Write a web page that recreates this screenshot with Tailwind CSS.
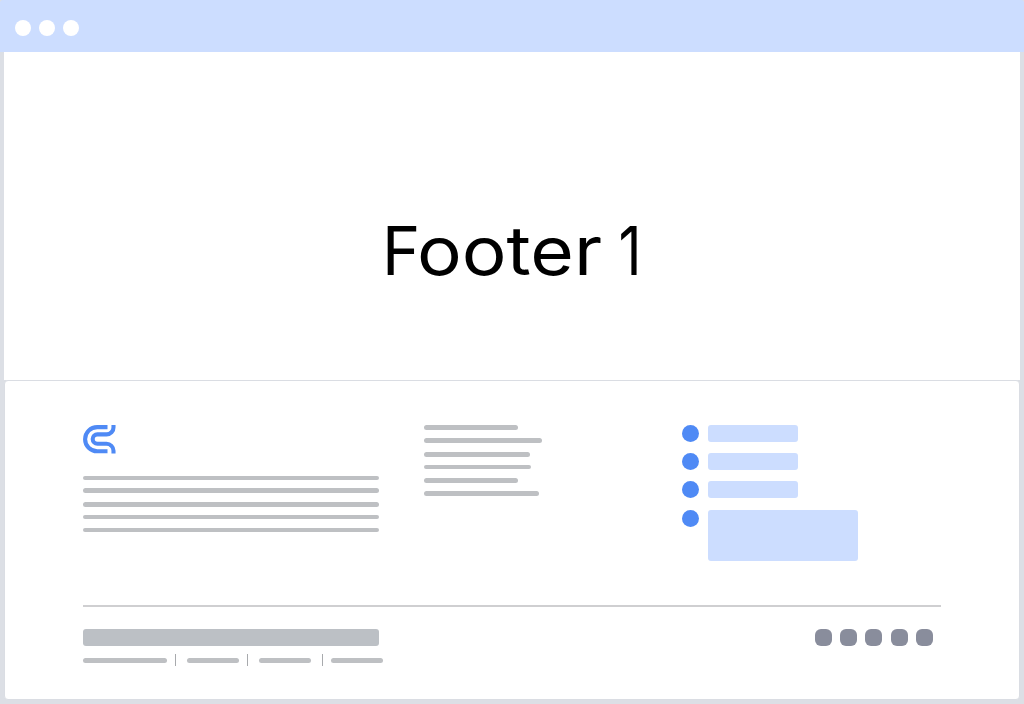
<!DOCTYPE html>
<html lang="en">
<head>
<meta charset="utf-8">
<title>Footer 1</title>
<script src="https://cdn.jsdelivr.net/npm/@tailwindcss/browser@4"></script>
</head>
<body class="w-[1024px] h-[704px] overflow-hidden bg-[#dcdfe5]">
<div class="flex flex-col h-[704px] w-[1024px]">
  <header class="flex items-center h-[52px] shrink-0 bg-[#ccddff] pl-[15px] pt-1 gap-[8.500px] rounded-t-[3px]">
    <span class="size-[15.500px] rounded-full bg-white"></span>
    <span class="size-[15.500px] rounded-full bg-white"></span>
    <span class="size-[15.500px] rounded-full bg-white"></span>
  </header>
  <main class="h-[328px] shrink-0 mx-1 bg-white pl-[378px] pt-[158px]">
    <h1 class="flex font-['Inter',sans-serif] text-[67.5px] leading-[82px] text-black whitespace-pre"><span class="w-[35px] inline-block origin-left scale-x-[0.96]">F</span><span class="inline-block origin-left scale-x-[1.107] w-[178px]">ooter</span><span> </span><span class="inline-block origin-right scale-x-[0.84]">1</span></h1>
  </main>
  <footer class="h-[320px] shrink-0 mx-1 bg-white border border-[#dadde3] rounded-[4px] px-[78px] pt-[44px]">
    <div class="flex h-[180px]">
      <section class="w-[296px] mr-[45px]">
        <svg class="block" width="33" height="29" viewBox="0 0 33 29" fill="none" stroke="#4f8af5" stroke-width="4.1">
          <path d="M24.5 2.1H14.2a12.100 12.100 0 0 0 0 24.200H24.5"/>
          <path d="M30.500 0V2.2A7 7 0 0 1 23.500 9.4H14.4a4.700 4.700 0 0 0 0 9.4H23.500A7 7 0 0 1 30.500 25.800V28.500"/>
        </svg>
        <div class="flex flex-col mt-[22px]">
          <i class="block h-1 rounded-full bg-[#bec0c3]"></i>
          <i class="block h-[5px] mt-2 rounded-full bg-[#bec0c3]"></i>
          <i class="block h-[5px] mt-[9px] rounded-full bg-[#bec0c3]"></i>
          <i class="block h-1 mt-2 rounded-full bg-[#bec0c3]"></i>
          <i class="block h-1 mt-[9px] rounded-full bg-[#bec0c3]"></i>
        </div>
      </section>
      <section class="w-[258px] flex flex-col">
        <i class="block h-[5px] w-[94px] rounded-full bg-[#bec0c3]"></i>
        <i class="block h-[5px] mt-2 w-[118px] rounded-full bg-[#bec0c3]"></i>
        <i class="block h-[5px] mt-[9px] w-[106px] rounded-full bg-[#bec0c3]"></i>
        <i class="block h-1 mt-2 w-[107px] rounded-full bg-[#bec0c3]"></i>
        <i class="block h-[5px] mt-[9px] w-[94px] rounded-full bg-[#bec0c3]"></i>
        <i class="block h-[5px] mt-2 w-[115px] rounded-full bg-[#bec0c3]"></i>
      </section>
      <section class="flex flex-col">
        <div class="flex gap-[9px] h-7"><i class="size-[17px] rounded-full bg-[#4f8af5]"></i><i class="w-[90px] h-[17px] rounded-[3px] bg-[#ccddff]"></i></div>
        <div class="flex gap-[9px] h-7"><i class="size-[17px] rounded-full bg-[#4f8af5]"></i><i class="w-[90px] h-[17px] rounded-[3px] bg-[#ccddff]"></i></div>
        <div class="flex gap-[9px] h-[29px]"><i class="size-[17px] rounded-full bg-[#4f8af5]"></i><i class="w-[90px] h-[17px] rounded-[3px] bg-[#ccddff]"></i></div>
        <div class="flex gap-[9px]"><i class="size-[17px] rounded-full bg-[#4f8af5]"></i><i class="w-[150px] h-[50.500px] rounded-[3px] bg-[#ccddff]"></i></div>
      </section>
    </div>
    <div class="h-[2px] bg-[#cfcfd1]"></div>
    <div class="flex justify-between pt-[22px]">
      <div>
        <div class="w-[296px] h-[17px] rounded-[3px] bg-[#bcc0c5]"></div>
        <div class="flex items-center h-3 mt-2">
          <i class="w-[84px] h-[5px] rounded-full bg-[#bec0c3]"></i>
          <i class="w-px h-3 bg-[#a8aaad] ml-2"></i>
          <i class="w-[52px] h-[5px] rounded-full bg-[#bec0c3] ml-[11px]"></i>
          <i class="w-px h-3 bg-[#a8aaad] ml-2"></i>
          <i class="w-[52px] h-[5px] rounded-full bg-[#bec0c3] ml-[11px]"></i>
          <i class="w-px h-3 bg-[#a8aaad] ml-[11px]"></i>
          <i class="w-[52px] h-[5px] rounded-full bg-[#bec0c3] ml-2"></i>
        </div>
      </div>
      <div class="flex gap-[8.400px] mr-[7.800px]">
        <i class="size-[17px] rounded-[6px] bg-[#898d9c]"></i>
        <i class="size-[17px] rounded-[6px] bg-[#898d9c]"></i>
        <i class="size-[17px] rounded-[6px] bg-[#898d9c]"></i>
        <i class="size-[17px] rounded-[6px] bg-[#898d9c]"></i>
        <i class="size-[17px] rounded-[6px] bg-[#898d9c]"></i>
      </div>
    </div>
  </footer>
</div>
</body>
</html>
